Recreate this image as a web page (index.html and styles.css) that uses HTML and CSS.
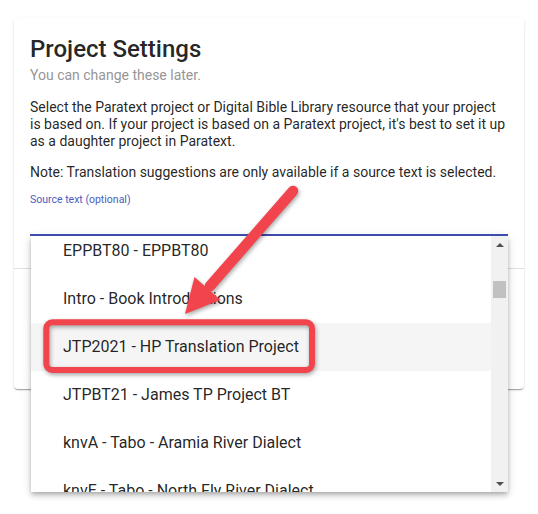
FILE: index.html
```html
<!DOCTYPE html>
<html lang="en">
<head>
<meta charset="utf-8">
<title>Project Settings</title>
<link rel="stylesheet" href="styles.css">
</head>
<body>
<div class="page">
  <div class="card">
    <div class="card-body">
      <h1 class="title">Project Settings</h1>
      <div class="subtitle">You can change these later.</div>
      <p class="text">Select the Paratext project or Digital Bible Library resource that your project is based on. If your project is based on a Paratext project, it's best to set it up as a daughter project in Paratext.</p>
      <p class="text">Note: Translation suggestions are only available if a source text is selected.</p>
      <div class="field">
        <div class="field-label">Source text (optional)</div>
        <div class="field-input"></div>
        <div class="panel">
          <div class="options">
            <ul class="list">
              <li class="option">EPPBT80 - EPPBT80</li>
              <li class="option">Intro - Book Introductions</li>
              <li class="option active">JTP2021 - HP Translation Project</li>
              <li class="option">JTPBT21 - James TP Project BT</li>
              <li class="option">knvA - Tabo - Aramia River Dialect</li>
              <li class="option">knvE - Tabo - North Fly River Dialect</li>
            </ul>
          </div>
          <div class="scrollbar">
            <div class="sb-btn"><span class="tri-up"></span></div>
            <div class="sb-track"><div class="sb-thumb"></div></div>
            <div class="sb-btn"><span class="tri-down"></span></div>
          </div>
        </div>
      </div>
    </div>
    <div class="card-footer"></div>
  </div>
  <svg class="annotation" width="538" height="514" viewBox="0 0 538 514" aria-hidden="true">
    <g class="mark">
      <rect x="46.3" y="322.3" width="265.7" height="47.7" rx="6" ry="6" fill="none" stroke="#f2444c" stroke-width="6"/>
    </g>
    <g class="mark">
      <line x1="293" y1="191" x2="210" y2="286" stroke="#f2444c" stroke-width="10.5" stroke-linecap="round"/>
      <polygon points="185,314 194.5,277 220.5,300" fill="#f2444c"/>
    </g>
  </svg>
</div>
</body>
</html>
```
FILE: styles.css
```css
html, body {
  margin: 0;
  padding: 0;
  background: #ffffff;
}

.page {
  position: relative;
  width: 538px;
  height: 514px;
  padding: 18px 14px 0 14px;
  box-sizing: border-box;
  overflow: hidden;
  font-family: Roboto, "Liberation Sans", Arial, sans-serif;
  color: rgba(0, 0, 0, 0.87);
}

.card {
  width: 510px;
  background: #fff;
  border-radius: 4px;
  box-shadow: 0 2px 1px -1px rgba(0, 0, 0, 0.2), 0 1px 1px 0 rgba(0, 0, 0, 0.14), 0 1px 3px 0 rgba(0, 0, 0, 0.12);
}

.card-body {
  padding: 15px 16px 32px 16px;
  border-bottom: 1px solid #e0e0e0;
}

.title {
  margin: 0;
  font-size: 24px;
  line-height: 32px;
  font-weight: 500;
  color: rgba(0, 0, 0, 0.87);
}

.subtitle {
  font-size: 14px;
  line-height: 20px;
  color: #969696;
}

.text {
  margin: 14px 0 0 0;
  font-size: 14px;
  line-height: 17px;
}

.field {
  position: relative;
  margin-top: 12px;
}

.field-label {
  font-size: 10.5px;
  line-height: 14px;
  color: #4b5cc0;
}

.field-input {
  height: 27px;
  border-bottom: 2px solid #3f51b5;
}

.card-footer {
  height: 120px;
}

.panel {
  position: absolute;
  top: 100%;
  left: 1px;
  right: 0;
  height: 256px;
  display: flex;
  background: #fff;
  box-shadow: 0 2px 4px -1px rgba(0, 0, 0, 0.2), 0 4px 5px 0 rgba(0, 0, 0, 0.14), 0 1px 10px 0 rgba(0, 0, 0, 0.12);
  z-index: 2;
}

.options {
  flex: 1;
  overflow: hidden;
}

.list {
  list-style: none;
  margin: -9px 0 0 0;
  padding: 0;
}

.option {
  height: 48px;
  line-height: 48px;
  padding-left: 32px;
  font-size: 16px;
  color: rgba(0, 0, 0, 0.87);
  white-space: nowrap;
}

.option.active {
  background: #f5f5f5;
}

.scrollbar {
  width: 17px;
  display: flex;
  flex-direction: column;
  background: #f1f1f1;
}

.sb-btn {
  height: 17px;
  display: flex;
  align-items: center;
  justify-content: center;
}

.sb-track {
  flex: 1;
  padding: 28px 2px 0 2px;
}

.sb-thumb {
  height: 17px;
  background: #c1c1c1;
}

.tri-up {
  width: 0;
  height: 0;
  border-left: 4px solid transparent;
  border-right: 4px solid transparent;
  border-bottom: 4px solid #505050;
}

.tri-down {
  width: 0;
  height: 0;
  border-left: 4px solid transparent;
  border-right: 4px solid transparent;
  border-top: 4px solid #505050;
}

.annotation {
  position: absolute;
  left: 0;
  top: 0;
  z-index: 5;
  pointer-events: none;
}

.mark {
  filter: drop-shadow(1px 2px 2px rgba(0, 0, 0, 0.35));
}
```
